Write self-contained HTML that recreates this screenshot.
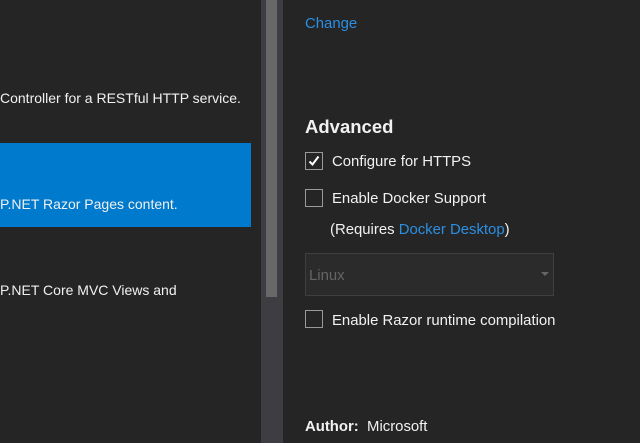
<!DOCTYPE html>
<html><head><style>
body{margin:0;width:640px;height:443px;background:#252526;font-family:"Liberation Sans",sans-serif;color:#f1f1f1;position:relative;overflow:hidden;font-size:14.9px}
.a{position:absolute;white-space:nowrap}
.l{font-size:14px}
.cb{position:absolute;width:18px;height:18px;border:1px solid #9a9a9a;box-sizing:border-box;left:305px}
.lnk{color:#2b8fe3}
</style></head><body>
<div class="a l" style="left:0;top:90px">Controller for a RESTful HTTP service.</div>
<div class="a" style="left:0;top:143px;width:251px;height:84px;background:#007acc"></div>
<div class="a l" style="left:0;top:196px">P.NET Razor Pages content.</div>
<div class="a l" style="left:0;top:282px">P.NET Core MVC Views and</div>
<div class="a" style="left:261px;top:0;width:22px;height:443px;background:#3e3e42"></div>
<div class="a" style="left:266px;top:0;width:11px;height:297px;background:#686868"></div>
<div class="a lnk" style="left:305px;top:16px">Change</div>
<div class="a" style="left:305px;top:116px;font-size:18.5px;font-weight:bold">Advanced</div>
<div class="cb" style="top:152px"><svg width="16" height="16" style="position:absolute;left:0;top:0"><path d="M3.5 8.5 L6.5 11.5 L12.5 3.5" stroke="#fff" stroke-width="2" fill="none"/></svg></div>
<div class="a" style="left:332px;top:154px">Configure for HTTPS</div>
<div class="cb" style="top:189px"></div>
<div class="a" style="left:332px;top:191px">Enable Docker Support</div>
<div class="a" style="left:330px;top:222px">(Requires <span class="lnk">Docker Desktop</span>)</div>
<div class="a" style="left:305px;top:253px;width:249px;height:43px;box-sizing:border-box;border:1px solid #3f3f3f;background:#2b2b2c"></div>
<div class="a" style="left:309px;top:268px;color:#656565">Linux</div>
<div class="a" style="left:541px;top:272px;width:0;height:0;border-left:4px solid transparent;border-right:4px solid transparent;border-top:4px solid #656565"></div>
<div class="cb" style="top:310px"></div>
<div class="a" style="left:332px;top:313px">Enable Razor runtime compilation</div>
<div class="a" style="left:305px;top:419px"><b>Author:</b>&nbsp; Microsoft</div>
</body></html>
